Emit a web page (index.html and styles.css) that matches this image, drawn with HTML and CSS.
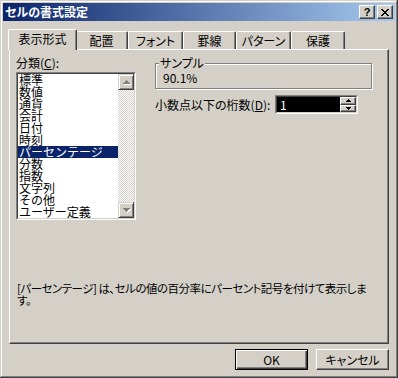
FILE: index.html
```html
<!DOCTYPE html>
<html lang="ja">
<head>
    <meta charset="UTF-8">
    <title>セルの書式設定</title>
    <link rel="stylesheet" href="styles.css">
</head>
<body>
    <div class="window">
        <!-- Title bar -->
        <div class="titlebar">
            <span class="title">セルの書式設定</span>
            <div class="caption-buttons">
                <div class="cap-btn help">?</div>
                <div class="cap-btn close">
                    <svg width="8" height="7" viewBox="0 0 8 7"><path fill="#000" d="M0 0h2v1h-2z M6 0h2v1h-2z M1 1h2v1h-2z M5 1h2v1h-2z M2 2h4v1h-4z M3 3h2v1h-2z M2 4h4v1h-4z M1 5h2v1h-2z M5 5h2v1h-2z M0 6h2v1h-2z M6 6h2v1h-2z"/></svg>
                </div>
            </div>
        </div>

        <div class="dialog-body">
            <!-- Tabs -->
            <div class="tabs">
                <div class="tab active tab-number">表示形式</div>
                <div class="tab tab-align">配置</div>
                <div class="tab tab-font">フォント</div>
                <div class="tab tab-border">罫線</div>
                <div class="tab tab-pattern">パターン</div>
                <div class="tab tab-protect">保護</div>
            </div>

            <div class="panel">
                <div class="panel-top">
                    <!-- Category list -->
                    <div class="category">
                        <div class="label">分類(<u>C</u>):</div>
                        <div class="listbox">
                            <div class="listbox-inner">
                                <ul class="items">
                                    <li>標準</li>
                                    <li>数値</li>
                                    <li>通貨</li>
                                    <li>会計</li>
                                    <li>日付</li>
                                    <li>時刻</li>
                                    <li class="selected">パーセンテージ</li>
                                    <li>分数</li>
                                    <li>指数</li>
                                    <li>文字列</li>
                                    <li>その他</li>
                                    <li>ユーザー定義</li>
                                </ul>
                                <div class="scrollbar">
                                    <div class="scroll-btn">
                                        <svg width="12" height="12" viewBox="0 0 12 12"><path fill="#fff" d="M7 5h1v1h-1z M6 6h3v1h-3z M5 7h5v1h-5z M4 8h7v1h-7z"/><path fill="#808080" d="M6 4h1v1h-1z M5 5h3v1h-3z M4 6h5v1h-5z M3 7h7v1h-7z"/></svg>
                                    </div>
                                    <div class="scroll-track"></div>
                                    <div class="scroll-btn">
                                        <svg width="12" height="12" viewBox="0 0 12 12"><path fill="#fff" d="M4 5h7v1h-7z M5 6h5v1h-5z M6 7h3v1h-3z M7 8h1v1h-1z"/><path fill="#808080" d="M3 4h7v1h-7z M4 5h5v1h-5z M5 6h3v1h-3z M6 7h1v1h-1z"/></svg>
                                    </div>
                                </div>
                            </div>
                        </div>
                    </div>

                    <!-- Right side options -->
                    <div class="options">
                        <fieldset class="sample">
                            <legend>サンプル</legend>
                            <div class="sample-value">90.1%</div>
                        </fieldset>

                        <div class="decimal-row">
                            <label>小数点以下の桁数(<u>D</u>):</label>
                            <div class="spin">
                                <div class="spin-inner">
                                    <div class="spin-field">1</div>
                                    <div class="spin-buttons">
                                        <div class="spin-btn">
                                            <svg width="5" height="3" viewBox="0 0 5 3"><path fill="#000" d="M2 0h1v1h-1z M1 1h3v1h-3z M0 2h5v1h-5z"/></svg>
                                        </div>
                                        <div class="spin-btn">
                                            <svg width="5" height="3" viewBox="0 0 5 3"><path fill="#000" d="M0 0h5v1h-5z M1 1h3v1h-3z M2 2h1v1h-1z"/></svg>
                                        </div>
                                    </div>
                                </div>
                            </div>
                        </div>
                    </div>
                </div>

                <p class="description">[パーセンテージ] は、セルの値の百分率にパーセント記号を付けて表示しま<br>す。</p>
            </div>

            <div class="buttons">
                <button class="btn default">OK</button>
                <button class="btn">キャンセル</button>
            </div>
        </div>
    </div>
</body>
</html>
```

FILE: styles.css
```css
body {
    margin: 0;
    font-family: "Noto Sans CJK JP", sans-serif;
    font-size: 12px;
    color: #000;
    background-color: #D4D0C8;
}

.window {
    width: 398px;
    height: 378px;
    box-sizing: border-box;
    padding: 3px;
    background-color: #D4D0C8;
    box-shadow: inset -1px -1px #404040, inset 1px 1px #D4D0C8, inset -2px -2px #808080, inset 2px 2px #fff;
}

/* Title bar */
.titlebar {
    height: 18px;
    display: flex;
    align-items: center;
    justify-content: space-between;
    padding: 0 2px;
    background: linear-gradient(to right, #0A246A, #A6CAF0);
}

.title {
    color: #fff;
    font-weight: bold;
    font-size: 12px;
    line-height: 14px;
    font-feature-settings: "palt";
}

.caption-buttons {
    display: flex;
    gap: 2px;
}

.cap-btn {
    width: 16px;
    height: 14px;
    box-sizing: border-box;
    background-color: #D4D0C8;
    border: 1px solid;
    border-color: #fff #404040 #404040 #fff;
    box-shadow: inset -1px -1px #808080;
    display: flex;
    align-items: center;
    justify-content: center;
}

.help {
    font-family: "Liberation Sans", sans-serif;
    font-weight: bold;
    font-size: 11px;
    line-height: 11px;
}

/* Tabs */
.dialog-body {
    padding: 8px 6px 0 6px;
}

.tabs {
    display: flex;
    align-items: flex-end;
    height: 20px;
    padding-left: 1px;
}

.tab {
    height: 18px;
    box-sizing: border-box;
    padding-top: 2px;
    line-height: 14px;
    text-align: center;
    border-top: 1px solid #fff;
    border-left: 1px solid #fff;
    border-right: 1px solid #404040;
    border-radius: 2px 2px 0 0;
    box-shadow: inset -1px 0 #808080;
    font-feature-settings: "palt";
}

.tab.active {
    height: 21px;
    margin: 0 -2px -1px -2px;
    position: relative;
    z-index: 1;
    background-color: #D4D0C8;
}

.tab-number { width: 65px; }
.tab-number.active { width: 69px; }
.tab-align { width: 53px; }
.tab-font { width: 55px; }
.tab-border { width: 53px; }
.tab-pattern { width: 55px; }
.tab-protect { width: 54px; }

/* Main panel */
.panel {
    width: 380px;
    height: 295px;
    box-sizing: border-box;
    padding: 6px 0 0 6px;
    border: 1px solid;
    border-color: #fff #404040 #404040 #fff;
    box-shadow: inset -1px -1px #808080;
}

.panel-top {
    display: flex;
}

.category {
    width: 120px;
}

.label {
    line-height: 14px;
    margin-bottom: 2px;
    font-feature-settings: "palt";
}

.listbox {
    height: 148px;
    box-sizing: border-box;
    border: 1px solid;
    border-color: #808080 #fff #fff #808080;
}

.listbox-inner {
    height: 100%;
    box-sizing: border-box;
    border: 1px solid;
    border-color: #404040 #D4D0C8 #D4D0C8 #404040;
    background-color: #fff;
    display: flex;
}

.items {
    flex: 1;
    margin: 0;
    padding: 0;
    list-style: none;
}

.items li {
    height: 12px;
    line-height: 12px;
    padding-left: 1px;
    white-space: nowrap;
}

.items li.selected {
    background-color: #0A246A;
    color: #fff;
}

.scrollbar {
    width: 16px;
    display: flex;
    flex-direction: column;
}

.scroll-btn {
    width: 16px;
    height: 16px;
    box-sizing: border-box;
    background-color: #D4D0C8;
    border: 1px solid;
    border-color: #D4D0C8 #404040 #404040 #D4D0C8;
    box-shadow: inset 1px 1px #fff, inset -1px -1px #808080;
    display: flex;
    align-items: center;
    justify-content: center;
}

.scroll-track {
    flex: 1;
    background: repeating-conic-gradient(#fff 0 25%, #D4D0C8 0 50%) 0 0 / 2px 2px;
}

/* Right side */
.options {
    width: 217px;
    margin-left: 19px;
}

.sample {
    margin: 0;
    padding: 0 0 3px 3px;
    min-width: 0;
    border: 1px solid #808080;
    box-shadow: inset 1px 1px #fff, 1px 1px #fff;
}

.sample legend {
    padding: 0 1px;
    line-height: 14px;
    background-color: #D4D0C8;
    font-feature-settings: "palt";
}

.sample-value {
    margin-top: 1px;
    padding-left: 4px;
    line-height: 14px;
}

.decimal-row {
    display: grid;
    grid-template-columns: 120px 83px;
    align-items: center;
    margin-top: 6px;
    height: 19px;
}

.decimal-row label {
    line-height: 14px;
    white-space: nowrap;
    font-feature-settings: "palt";
}

.spin {
    height: 19px;
    box-sizing: border-box;
    border: 1px solid;
    border-color: #808080 #fff #fff #808080;
}

.spin-inner {
    height: 100%;
    box-sizing: border-box;
    border: 1px solid;
    border-color: #404040 #D4D0C8 #D4D0C8 #404040;
    display: flex;
}

.spin-field {
    flex: 1;
    background-color: #000;
    color: #fff;
    line-height: 15px;
    padding-left: 3px;
}

.spin-buttons {
    width: 16px;
    display: flex;
    flex-direction: column;
}

.spin-btn {
    flex: 1;
    box-sizing: border-box;
    background-color: #D4D0C8;
    border: 1px solid;
    border-color: #fff #404040 #404040 #fff;
    box-shadow: inset -1px -1px #808080;
    display: flex;
    align-items: center;
    justify-content: center;
}

.description {
    margin: 62px 0 0 1px;
    font-size: 11.5px;
    letter-spacing: -0.5px;
    line-height: 12px;
    white-space: nowrap;
    font-feature-settings: "palt";
}

/* Bottom buttons */
.buttons {
    display: flex;
    justify-content: flex-end;
    gap: 8px;
    margin-top: 5px;
}

.btn {
    width: 73px;
    height: 21px;
    margin: 0;
    padding: 0;
    font-family: "Noto Sans CJK JP", sans-serif;
    font-size: 12px;
    line-height: 14px;
    color: #000;
    background-color: #D4D0C8;
    border: 1px solid;
    border-color: #fff #404040 #404040 #fff;
    box-shadow: inset -1px -1px #808080;
    font-feature-settings: "palt";
}

.btn.default {
    border-color: #000;
    box-shadow: inset 1px 1px #fff, inset -1px -1px #404040, inset -2px -2px #808080;
}
```
